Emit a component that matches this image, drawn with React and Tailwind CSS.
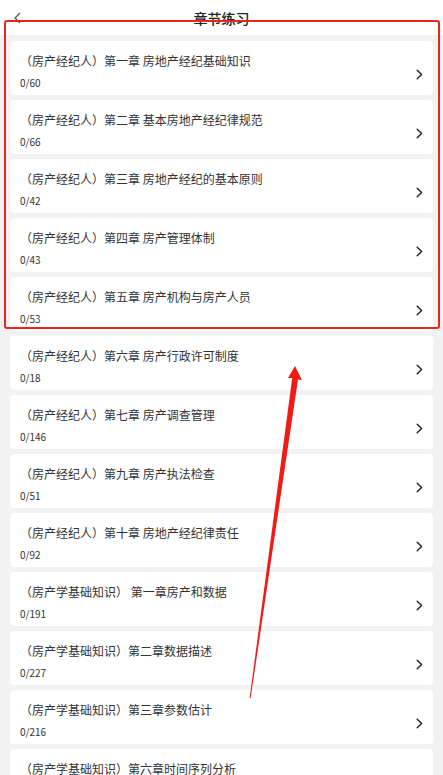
import React from "react";

const items = [
  ["（房产经纪人）第一章 房地产经纪基础知识", "0/60"],
  ["（房产经纪人）第二章 基本房地产经纪律规范", "0/66"],
  ["（房产经纪人）第三章 房地产经纪的基本原则", "0/42"],
  ["（房产经纪人）第四章 房产管理体制", "0/43"],
  ["（房产经纪人）第五章 房产机构与房产人员", "0/53"],
  ["（房产经纪人）第六章 房产行政许可制度", "0/18"],
  ["（房产经纪人）第七章 房产调查管理", "0/146"],
  ["（房产经纪人）第九章 房产执法检查", "0/51"],
  ["（房产经纪人）第十章 房地产经纪律责任", "0/92"],
  ["（房产学基础知识） 第一章房产和数据", "0/191"],
  ["（房产学基础知识）第二章数据描述", "0/227"],
  ["（房产学基础知识）第三章参数估计", "0/216"],
  ["（房产学基础知识）第六章时间序列分析", "0/0"],
];

function Chevron() {
  return (
    <svg width="7" height="11" viewBox="0 0 7 11" className="mt-[28px] mr-[10px] shrink-0">
      <path d="M1.2 1.2 L5.6 5.5 L1.2 9.8" fill="none" stroke="#222" strokeWidth="1.4" strokeLinecap="round" strokeLinejoin="round" />
    </svg>
  );
}

export default function App() {
  return (
    <div
      className="relative w-[443px] h-[775px] overflow-hidden bg-[#f2f2f2]"
      style={{ fontFamily: '"Noto Sans CJK SC", "Noto Sans", Roboto, sans-serif' }}
    >
      <div className="relative h-[35px] bg-white flex items-center justify-center">
        <svg width="10" height="12" viewBox="0 0 10 12" className="absolute left-[13px] top-[12px]">
          <path d="M7 1 L2 6 L7 11" fill="none" stroke="#555" strokeWidth="1.3" />
        </svg>
        <span className="text-[14px] font-medium text-[#222] leading-none">章节练习</span>
      </div>
      <div className="flex flex-col gap-[5px] px-[10px] pt-[6px]">
        {items.map(([title, count], i) => (
          <div key={i} className="h-[54px] shrink-0 bg-white rounded-[4px] flex items-start">
            <div className="flex-1 pl-[10px] pt-[12px] flex flex-col">
              <div className="text-[12px] leading-[16px] text-[#333]">{title}</div>
              <div className="mt-[7px] text-[10px] leading-[14px] text-[#333]">{count}</div>
            </div>
            <Chevron />
          </div>
        ))}
      </div>
      <div className="absolute left-[4px] top-[20px] w-[436px] h-[309px] border-2 border-[#e8261f] rounded-[3px] pointer-events-none" />
      <svg className="absolute left-0 top-0 pointer-events-none" width="443" height="775" viewBox="0 0 443 775">
        <polygon points="295,366 302,380 298,379.5 250.6,698 249.6,698 292.2,378 288,378" fill="#ef1c16" />
      </svg>
    </div>
  );
}
